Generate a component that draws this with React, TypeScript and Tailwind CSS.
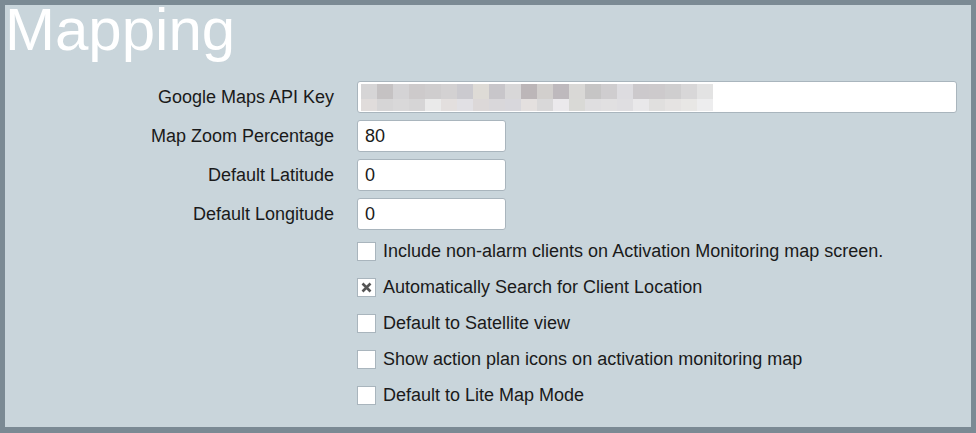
import React from 'react';

const keyTop = ['#d6d5d6', '#c5c2c3', '#d4d3d5', '#cdcacb', '#cfcdce', '#d3d1d2', '#cbcacf', '#dedbd6', '#c8c6ca', '#d8d7d8', '#bcb6b8', '#d2cfcd', '#beb9bd', '#d9d8d6', '#c6c5c5', '#cfcdcf', '#dddce0', '#ccc9cc', '#cdcacc', '#cfcecf', '#d8d7d8', '#e3e3e3'];
const keyBottom = ['#e0dcdb', '#d6d5d6', '#d9d8d9', '#d6d5d6', '#eaeaea', '#e3dfde', '#e1e0e4', '#dcd8d8', '#d9d7da', '#d8d7dc', '#e4e0df', '#d9d8d9', '#ebe9ec', '#d9d9d6', '#dfdee0', '#e1e0e1', '#dfdee1', '#e9e8ea', '#e0dfde', '#e5e3e2', '#e8e7e5', '#ededee'];

const fields = [
    { label: 'Map Zoom Percentage', value: '80' },
    { label: 'Default Latitude', value: '0' },
    { label: 'Default Longitude', value: '0' },
];

const options = [
    { text: 'Include non-alarm clients on Activation Monitoring map screen.', checked: false },
    { text: 'Automatically Search for Client Location', checked: true },
    { text: 'Default to Satellite view', checked: false },
    { text: 'Show action plan icons on activation monitoring map', checked: false },
    { text: 'Default to Lite Map Mode', checked: false },
];

export default function App() {
    return (
        <div className="w-[976px] h-[433px] bg-[#7b8a94] pt-[5px] pl-[5px] pr-[5px] pb-[6px] font-['Liberation_Sans',Arial,sans-serif] text-[#1a1a1a]">
            <div className="w-[966px] h-[422px] bg-[#c9d5db] flex flex-col">
                <h1 className="-mt-[5px] text-[60px] leading-[60px] text-white font-normal">Mapping</h1>

                <div className="mt-[21px] grid grid-cols-[329px_1fr] gap-x-[23px] gap-y-[7px] text-[18px]">
                    <div className="h-[32px] flex items-center justify-end">Google Maps API Key</div>
                    <div className="h-[32px] mr-[14px] bg-white border border-[#a9b5bd] rounded-[3px] pl-[3px] pt-[2px]">
                        <div className="flex">
                            {keyTop.map((c, i) => (
                                <div key={i} className="w-[16px] h-[15px]" style={{ background: c }} />
                            ))}
                        </div>
                        <div className="flex">
                            {keyBottom.map((c, i) => (
                                <div key={i} className="w-[16px] h-[12px]" style={{ background: c }} />
                            ))}
                        </div>
                    </div>

                    {fields.map((f) => (
                        <React.Fragment key={f.label}>
                            <div className="h-[32px] flex items-center justify-end">{f.label}</div>
                            <div className="h-[32px] w-[149px] bg-white border border-[#a9b5bd] rounded-[3px] px-[7px] flex items-center">{f.value}</div>
                        </React.Fragment>
                    ))}
                </div>

                <div className="mt-[12px] ml-[352px] flex flex-col gap-[17px] text-[18px]">
                    {options.map((o) => (
                        <label key={o.text} className="flex items-center h-[19px] gap-[7px]">
                            <span className="shrink-0 w-[19px] h-[19px] bg-white border border-[#a9b5bd] flex items-center justify-center">
                                {o.checked && (
                                    <svg width="11" height="11" viewBox="0 0 11 11">
                                        <path d="M1.5 1.5 L9.5 9.5 M9.5 1.5 L1.5 9.5" stroke="#555" strokeWidth="2.6" strokeLinecap="butt" />
                                    </svg>
                                )}
                            </span>
                            <span className="leading-[19px]">{o.text}</span>
                        </label>
                    ))}
                </div>
            </div>
        </div>
    );
}
